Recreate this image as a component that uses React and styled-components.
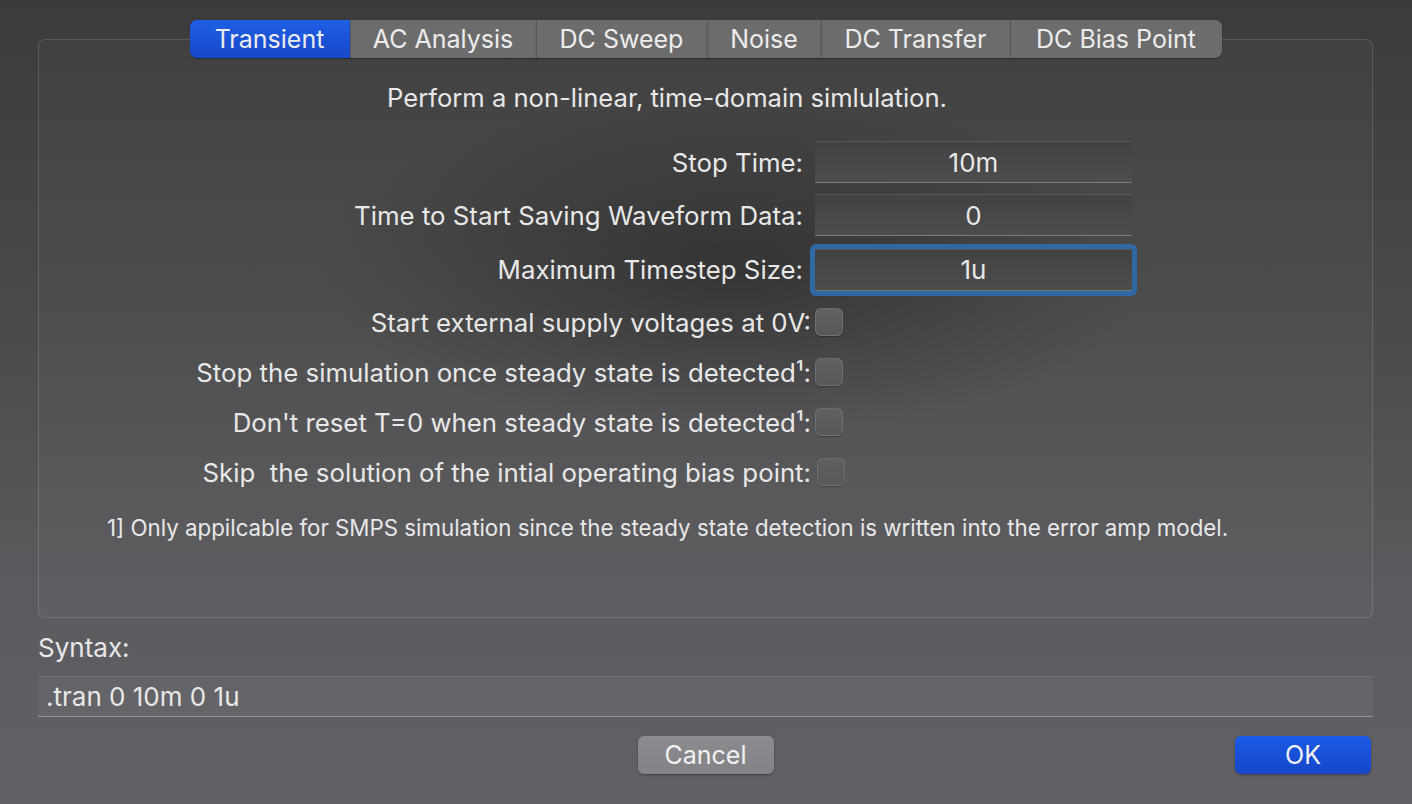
import React from 'react'
import styled, { createGlobalStyle } from 'styled-components'

const GlobalStyle = createGlobalStyle`
  html, body {
    margin: 0;
    padding: 0;
  }
  body {
    width: 1412px;
    height: 804px;
    overflow: hidden;
    font-family: Inter, "Liberation Sans", Arial, sans-serif;
    color: #e8e8e8;
    background:
      radial-gradient(ellipse 420px 170px at 52% 33%, rgba(0, 0, 0, 0.32), rgba(0, 0, 0, 0) 100%),
      linear-gradient(180deg, #3b3b3b 0%, #4a4a4b 40%, #5c5c60 75%, #606066 100%);
  }
`

const Window = styled.div`
  box-sizing: border-box;
  height: 804px;
  padding: 20px 39px 0 38px;
  display: flex;
  flex-direction: column;
`

const TabBar = styled.div`
  display: flex;
  justify-content: center;
  position: relative;
  z-index: 2;
  height: 38px;
`

const Tab = styled.div`
  box-sizing: border-box;
  width: ${p => p.w}px;
  height: 38px;
  display: flex;
  align-items: center;
  justify-content: center;
  font-size: 25px;
  color: #ececec;
  background: ${p => (p.active ? 'linear-gradient(180deg, #1f5fe6 0%, #1748c9 100%)' : '#6c6c6c')};
  border-left: ${p => (p.first || p.active ? 'none' : '1px solid #575757')};
  box-shadow: 0 1px 1px rgba(0, 0, 0, 0.35);
  &:first-child { border-radius: 7px 0 0 7px; }
  &:last-child { border-radius: 0 7px 7px 0; }
`

const Panel = styled.div`
  box-sizing: border-box;
  margin-top: -19px;
  height: 579px;
  border: 1px solid rgba(255, 255, 255, 0.13);
  border-radius: 7px;
  background: rgba(255, 255, 255, 0.025);
  padding-top: 43px;
`

const Description = styled.div`
  margin-left: 348px;
  font-size: 25.6px;
  line-height: 30px;
  margin-bottom: 23px;
`

const Row = styled.div`
  display: grid;
  grid-template-columns: 776px 317px;
  align-items: center;
  height: ${p => p.h}px;
`

const Label = styled.div`
  text-align: right;
  font-size: 25.8px;
  white-space: pre;
  padding-right: ${p => p.pr}px;
`

const Field = styled.div`
  box-sizing: border-box;
  height: 42px;
  display: flex;
  align-items: center;
  justify-content: center;
  font-size: 26px;
  background: linear-gradient(180deg, #424242 0%, #4d4d4d 100%);
  border-top: 1px solid rgba(255, 255, 255, 0.07);
  border-bottom: 1px solid rgba(255, 255, 255, 0.3);
  border-radius: ${p => (p.focused ? '2px' : '0')};
  box-shadow: ${p => (p.focused ? '0 0 0 5px #2f68a3' : 'none')};
`

const Check = styled.div`
  box-sizing: border-box;
  width: 28px;
  height: 28px;
  border-radius: 6px;
  background: linear-gradient(180deg, #606060 0%, #585858 100%);
  border: 1px solid rgba(255, 255, 255, 0.12);
  box-shadow: 0 1px 1px rgba(0, 0, 0, 0.3);
  margin-left: ${p => p.ml || 0}px;
`

const Footnote = styled.div`
  margin: 18px 0 0 68px;
  font-size: 22.3px;
  line-height: 26px;
`

const SyntaxLabel = styled.div`
  margin-top: 15px;
  font-size: 26px;
  line-height: 30px;
`

const SyntaxField = styled.div`
  box-sizing: border-box;
  margin-top: 13px;
  height: 41px;
  display: flex;
  align-items: center;
  padding-left: 8px;
  font-size: 26px;
  background: rgba(255, 255, 255, 0.04);
  border-top: 1px solid rgba(255, 255, 255, 0.1);
  border-bottom: 1px solid rgba(255, 255, 255, 0.32);
`

const ButtonRow = styled.div`
  margin-top: 19px;
  display: grid;
  grid-template-columns: 1fr auto 1fr;
  align-items: center;
`

const Button = styled.div`
  width: 136px;
  height: 38px;
  border-radius: 6px;
  display: flex;
  align-items: center;
  justify-content: center;
  font-size: 25px;
  color: #f2f2f2;
  background: ${p => (p.primary
    ? 'linear-gradient(180deg, #1b5ae6 0%, #1547c8 100%)'
    : 'linear-gradient(180deg, #8c8c90 0%, #838387 100%)')};
  box-shadow: 0 1px 2px rgba(0, 0, 0, 0.35);
  justify-self: ${p => p.align || 'center'};
  grid-column: ${p => p.col};
  margin-right: ${p => (p.primary ? '2px' : '0')};
`

const tabs = [
  { name: 'Transient', w: 160 },
  { name: 'AC Analysis', w: 186 },
  { name: 'DC Sweep', w: 171 },
  { name: 'Noise', w: 114 },
  { name: 'DC Transfer', w: 189 },
  { name: 'DC Bias Point', w: 212 }
]

const fields = [
  { label: 'Stop Time:', value: '10m', h: 52 },
  { label: 'Time to Start Saving Waveform Data:', value: '0', h: 54 },
  { label: 'Maximum Timestep Size:', value: '1u', h: 55, focused: true }
]

const checks = [
  { label: 'Start external supply voltages at 0V:' },
  { label: 'Stop the simulation once steady state is detected¹:' },
  { label: "Don't reset T=0 when steady state is detected¹:" },
  { label: 'Skip  the solution of the intial operating bias point:', ml: 2 }
]

export default function App () {
  return (
    <Window>
      <GlobalStyle />
      <TabBar>
        {tabs.map((t, i) => (
          <Tab key={t.name} w={t.w} active={i === 0} first={i === 0}>{t.name}</Tab>
        ))}
      </TabBar>
      <Panel>
        <Description>Perform a non-linear, time-domain simlulation.</Description>
        {fields.map(f => (
          <Row key={f.label} h={f.h}>
            <Label pr={12}>{f.label}</Label>
            <Field focused={f.focused}>{f.value}</Field>
          </Row>
        ))}
        {checks.map(c => (
          <Row key={c.label} h={50}>
            <Label pr={4}>{c.label}</Label>
            <Check ml={c.ml} />
          </Row>
        ))}
        <Footnote>1] Only appilcable for SMPS simulation since the steady state detection is written into the error amp model.</Footnote>
      </Panel>
      <SyntaxLabel>Syntax:</SyntaxLabel>
      <SyntaxField>.tran 0 10m 0 1u</SyntaxField>
      <ButtonRow>
        <Button col={2}>Cancel</Button>
        <Button col={3} align='end' primary>OK</Button>
      </ButtonRow>
    </Window>
  )
}
